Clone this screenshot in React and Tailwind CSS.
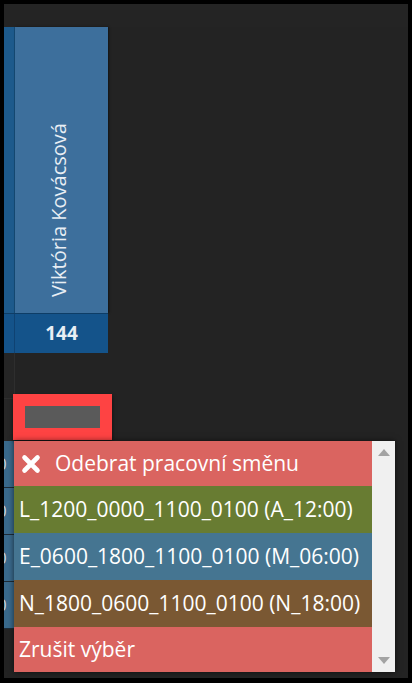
import React from 'react';

const font = { fontFamily: '"Open Sans", "Noto Sans", sans-serif' };

const options = [
  { label: 'L_1200_0000_1100_0100 (A_12:00)', cls: 'bg-[#687c32]' },
  { label: 'E_0600_1800_1100_0100 (M_06:00)', cls: 'bg-[#457591]' },
  { label: 'N_1800_0600_1100_0100 (N_18:00)', cls: 'bg-[#7a5833]' },
];

function ShiftMenu() {
  return (
    <div className="absolute left-[10px] top-[437px] flex w-[381px] h-[231px] shadow-[0_0_6px_rgba(0,0,0,0.6)]">
      <div className="flex flex-col flex-1 text-[21px] text-white" style={font}>
        <div className="h-[45px] flex items-center gap-[14px] pl-[7px] bg-[#da6460]">
          <svg width="20" height="20" viewBox="0 0 20 20" className="shrink-0">
            <path d="M3.5 3.5 L16.5 16.5 M16.5 3.5 L3.5 16.5" stroke="white" strokeWidth="4.6" strokeLinecap="round" />
          </svg>
          <span>Odebrat pracovní směnu</span>
        </div>
        {options.map((o) => (
          <div key={o.label} className={`h-[47px] flex items-center pl-[5px] whitespace-nowrap ${o.cls}`}>
            {o.label}
          </div>
        ))}
        <div className="flex-1 flex items-center pl-[5px] bg-[#da6460]">Zrušit výběr</div>
      </div>
      <div className="w-[23px] bg-[#f0f0f0] flex flex-col items-center justify-between py-[8px]">
        <svg width="12" height="7" viewBox="0 0 12 7"><path d="M0 7 L6 0 L12 7 Z" fill="#a3a3a3" /></svg>
        <svg width="12" height="7" viewBox="0 0 12 7"><path d="M0 0 L6 7 L12 0 Z" fill="#a3a3a3" /></svg>
      </div>
    </div>
  );
}

function RowStub() {
  return (
    <div className="h-[47px] w-[11px] bg-[#3a6a8c] border-b border-[#1d2b36] flex items-center overflow-hidden">
      <span className="text-[17px] text-[#c8d4dc] -ml-[7px]" style={font}>0</span>
    </div>
  );
}

export default function App() {
  return (
    <div className="w-[412px] h-[683px] bg-black pt-[4px] pl-[4px] pr-[4px] pb-[5px]">
      <div className="relative w-full h-full bg-[#232323] overflow-hidden flex flex-col">
        <div className="h-[23px] bg-[#242424]" />
        <div className="flex w-[104px]">
          <div className="w-[11px] bg-[#1d5a8c] border-r border-[#154a75]" />
          <div className="w-[93px] h-[286px] bg-[#3d6f9c] shadow-[1px_0_2px_rgba(0,0,0,0.5)] flex items-center justify-center">
            <span
              className="whitespace-nowrap text-[20px] text-[#e8eef4] -rotate-90 translate-x-[-3px] translate-y-[40px]"
              style={font}
            >
              Viktória Kovácsová
            </span>
          </div>
        </div>
        <div className="flex w-[104px] h-[40px] bg-[#14538a] border-t border-[#0e3d66]">
          <div className="w-[11px] border-r border-[#0f4272]" />
          <div className="flex-1 flex items-center justify-center text-[19px] font-bold text-[#e8eef4]" style={font}>
            144
          </div>
        </div>
        <div className="h-[46px] w-[11px] border-r border-b border-[#2e2e2e] bg-[#252525]" />
        <div className="h-[42px] w-[11px] border-r border-[#2e2e2e] bg-[#262626]" />
        <div className="flex flex-col">
          <RowStub />
          <RowStub />
          <RowStub />
          <RowStub />
        </div>
        <div className="absolute left-[9px] top-[390px] w-[99px] h-[46px] border-[12px] border-[#fe4343] shadow-[0_2px_4px_rgba(0,0,0,0.6)]">
          <div className="w-full h-full bg-[#5a5a5a]" />
        </div>
        <ShiftMenu />
      </div>
    </div>
  );
}
